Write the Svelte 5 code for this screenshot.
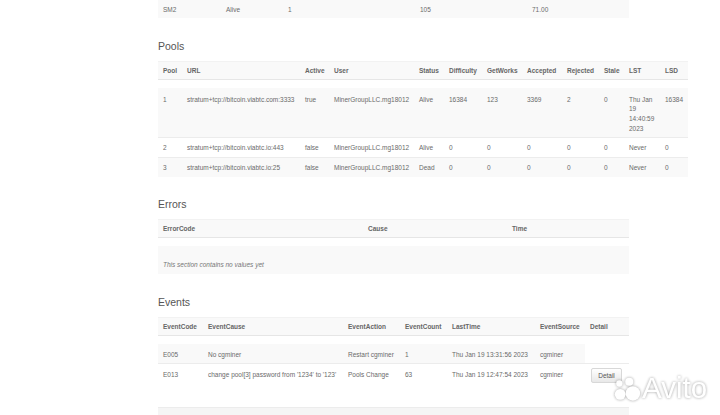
<script>
  const pools = [
    ['1', 'stratum+tcp://bitcoin.viabtc.com:3333', 'true', 'MinerGroupLLC.mg18012', 'Alive', '16384', '123', '3369', '2', '0', 'Thu Jan 19 14:40:59 2023', '16384'],
    ['2', 'stratum+tcp://bitcoin.viabtc.io:443', 'false', 'MinerGroupLLC.mg18012', 'Alive', '0', '0', '0', '0', '0', 'Never', '0'],
    ['3', 'stratum+tcp://bitcoin.viabtc.io:25', 'false', 'MinerGroupLLC.mg18012', 'Dead', '0', '0', '0', '0', '0', 'Never', '0']
  ]
  const poolHead = ['Pool', 'URL', 'Active', 'User', 'Status', 'Difficulty', 'GetWorks', 'Accepted', 'Rejected', 'Stale', 'LST', 'LSD']
  const eventHead = ['EventCode', 'EventCause', 'EventAction', 'EventCount', 'LastTime', 'EventSource', 'Detail']
</script>

<div class="page">
  <table class="sm">
    <tbody>
      <tr><td>SM2</td><td>Alive</td><td>1</td><td>105</td><td>71.00</td></tr>
    </tbody>
  </table>

  <h2 class="pools-title">Pools</h2>
  <table class="pools">
    <thead>
      <tr>{#each poolHead as h}<th>{h}</th>{/each}</tr>
    </thead>
    <tbody>
      {#each pools as row}
        <tr>{#each row as cell}<td>{cell}</td>{/each}</tr>
      {/each}
    </tbody>
  </table>

  <h2 class="errors-title">Errors</h2>
  <table class="errors">
    <thead>
      <tr><th>ErrorCode</th><th>Cause</th><th>Time</th></tr>
    </thead>
    <tbody>
      <tr><td colspan="3"><em>This section contains no values yet</em></td></tr>
    </tbody>
  </table>

  <h2 class="events-title">Events</h2>
  <div class="events-wrap">
    <table class="events">
      <thead>
        <tr>{#each eventHead as h}<th>{h}</th>{/each}</tr>
      </thead>
      <tbody>
        <tr class="odd">
          <td>E005</td><td>No cgminer</td><td>Restart cgminer</td><td>1</td><td>Thu Jan 19 13:31:56 2023</td><td>cgminer</td>
        </tr>
        <tr class="even">
          <td>E013</td><td>change pool[3] password from '1234' to '123'</td><td>Pools Change</td><td>63</td><td>Thu Jan 19 12:47:54 2023</td><td>cgminer</td>
          <td><button>Detail</button></td>
        </tr>
      </tbody>
    </table>
  </div>
  <div class="next-band"></div>

  <div class="watermark">
    <svg width="28" height="25" viewBox="0 0 31 27">
      <circle cx="22" cy="19" r="8" />
      <circle cx="8" cy="20" r="6" />
      <circle cx="18" cy="6" r="4.5" />
      <circle cx="7" cy="8" r="3.5" />
    </svg>
    <span>Avito</span>
  </div>
</div>

<style>
  :global(body) {
    margin: 0;
    background: #fff;
    overflow: hidden;
  }

  .page {
    position: relative;
    width: 720px;
    height: 415px;
    overflow: hidden;
    padding-left: 158px;
    box-sizing: border-box;
    font-family: "Liberation Sans", Arial, sans-serif;
    font-size: 6.5px;
    color: #6a6a6a;
  }

  table {
    border-collapse: collapse;
    table-layout: fixed;
  }

  th {
    height: 18px;
    padding: 0 0 0 5px;
    text-align: left;
    font-weight: bold;
    background: #f9f9f9;
    border-top: 1px solid #f2f2f2;
    border-bottom: 1px solid #e6e6e6;
    color: #666;
    box-sizing: border-box;
    white-space: nowrap;
  }

  td {
    padding: 0 5px;
    vertical-align: top;
    line-height: 9.7px;
    box-sizing: border-box;
  }

  thead::after {
    content: "";
    display: block;
    height: 8px;
  }

  h2 {
    margin: 0;
    font-size: 10.5px;
    line-height: 14px;
    font-weight: normal;
    color: #555;
  }

  .sm {
    width: 471px;
    background: #f9f9f9;
  }
  .sm td {
    height: 18px;
    vertical-align: middle;
    padding-top: 1px;
  }
  .sm td:nth-child(1) { width: 63px; }
  .sm td:nth-child(2) { width: 62px; }
  .sm td:nth-child(3) { width: 132px; }
  .sm td:nth-child(4) { width: 112px; }
  .sm td:nth-child(5) { width: 102px; }

  .pools-title { margin-top: 21px; }
  .pools { width: 530px; margin-top: 8px; }
  .pools th:nth-child(1) { width: 24px; }
  .pools th:nth-child(2) { width: 118px; }
  .pools th:nth-child(3) { width: 29px; }
  .pools th:nth-child(4) { width: 85px; }
  .pools th:nth-child(5) { width: 30px; }
  .pools th:nth-child(6) { width: 38px; }
  .pools th:nth-child(7) { width: 40px; }
  .pools th:nth-child(8) { width: 40px; }
  .pools th:nth-child(9) { width: 37px; }
  .pools th:nth-child(10) { width: 25px; }
  .pools th:nth-child(11) { width: 36px; }
  .pools th:nth-child(12) { width: 28px; }
  .pools tbody tr {
    border-bottom: 1px solid #ececec;
  }
  .pools tbody tr:nth-child(odd) { background: #f9f9f9; }
  .pools tbody tr:first-child td { height: 49px; padding-top: 6.5px; }
  .pools tbody tr:not(:first-child) td { height: 20px; padding-top: 1px; vertical-align: middle; }
  .pools tbody tr:last-child { border-bottom: none; }

  .errors-title { margin-top: 20px; }
  .errors { width: 471px; margin-top: 8px; }
  .errors th:nth-child(1) { width: 205px; }
  .errors th:nth-child(2) { width: 144px; }
  .errors th:nth-child(3) { width: 122px; }
  .errors td {
    height: 28px;
    background: #f9f9f9;
    vertical-align: bottom;
    padding-bottom: 4px;
    color: #777;
  }

  .events-title { margin-top: 21px; }
  .events-wrap { margin-top: 8px; }
  .events { width: 471px; }
  .events th:nth-child(1) { width: 45px; }
  .events th:nth-child(2) { width: 140px; }
  .events th:nth-child(3) { width: 57px; }
  .events th:nth-child(4) { width: 47px; }
  .events th:nth-child(5) { width: 88px; }
  .events th:nth-child(6) { width: 50px; }
  .events th:nth-child(7) { width: 44px; }
  .events td { height: 20px; padding-top: 6px; white-space: nowrap; }
  .events .odd td { background: #f9f9f9; height: 19px; }
  .events .even { border-top: 1px solid #ececec; }
  .events .even td { height: 44px; }

  button {
    display: block;
    width: 31px;
    height: 15px;
    margin: -2px 0 0 1px;
    padding: 0;
    font: 6.5px "Liberation Sans", Arial, sans-serif;
    color: #555;
    background: linear-gradient(#fff, #e8e8e8);
    border: 1px solid #d8d8d8;
    border-radius: 2px;
  }

  .next-band {
    width: 471px;
    height: 10px;
    background: #f5f5f5;
    border-top: 1px solid #ececec;
  }

  .watermark {
    position: absolute;
    left: 613px;
    top: 374px;
    display: flex;
    align-items: center;
    gap: 1px;
    opacity: 0.95;
    filter: drop-shadow(0 0 1.5px rgba(0, 0, 0, 0.4));
  }
  .watermark svg { fill: #fff; }
  .watermark span {
    font-size: 29.5px;
    line-height: 28px;
    color: #fff;
  }
</style>
